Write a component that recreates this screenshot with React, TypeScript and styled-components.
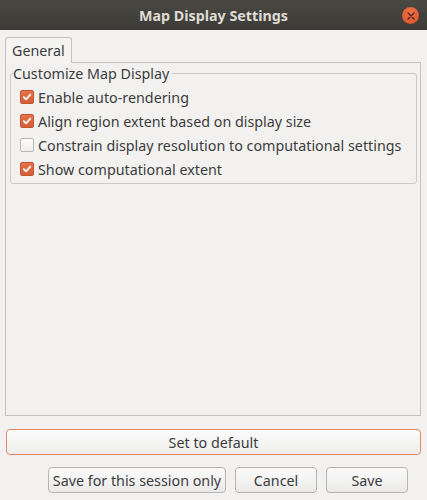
import React from 'react';
import styled, { createGlobalStyle } from 'styled-components';

const GlobalStyle = createGlobalStyle`
  html, body {
    margin: 0;
    padding: 0;
    width: 427px;
    height: 500px;
    overflow: hidden;
    background: #f2f1f0;
  }
  body {
    font-family: 'Noto Sans', 'Open Sans', 'DejaVu Sans', sans-serif;
    font-size: 14.3px;
    color: #3c3c3c;
  }
`;

const Window = styled.div`
  width: 427px;
  height: 500px;
  display: flex;
  flex-direction: column;
  background: #f2f1f0;
`;

const TitleBar = styled.div`
  height: 30px;
  flex: none;
  display: flex;
  align-items: center;
  justify-content: center;
  position: relative;
  background: linear-gradient(#4a4843, #3c3b37);
  color: #dfdbd2;
  font-weight: bold;
  font-size: 14.3px;
`;

const CloseButton = styled.div`
  position: absolute;
  right: 8px;
  top: 7px;
  width: 17px;
  height: 17px;
  border-radius: 50%;
  background: radial-gradient(circle at 50% 35%, #f0744a, #d8502a);
  display: flex;
  align-items: center;
  justify-content: center;
`;

const Body = styled.div`
  flex: 1;
  display: flex;
  flex-direction: column;
  padding: 6px 6px 7px 5px;
  min-height: 0;
`;

const TabStrip = styled.div`
  display: flex;
  height: 26px;
  flex: none;
`;

const Tab = styled.div`
  border: 1px solid #c6c2bd;
  border-bottom: none;
  border-radius: 3px 3px 0 0;
  padding: 0 6px;
  display: flex;
  align-items: center;
  background: #f5f4f3;
  position: relative;
  top: 1px;
  z-index: 1;
`;

const Panel = styled.div`
  flex: 1;
  border: 1px solid #c6c2bd;
  display: flex;
  flex-direction: column;
  padding: 2px 3px 0 4px;
  min-height: 0;
`;

const Group = styled.fieldset`
  margin: 0;
  padding: 3px 0 2px 2px;
  border: 1px solid #cdc9c4;
  border-radius: 3px;
  min-width: 0;
`;

const Legend = styled.legend`
  padding: 0 3px 0 0;
  line-height: 17px;
`;

const Options = styled.div`
  display: flex;
  flex-direction: column;
  padding-left: 7px;
`;

const Row = styled.label`
  display: flex;
  align-items: center;
  height: 24px;
  gap: 4px;
  white-space: nowrap;
`;

const Box = styled.span<{ $checked: boolean }>`
  width: 12px;
  height: 12px;
  flex: none;
  border-radius: 2px;
  border: 1px solid ${p => (p.$checked ? '#c4542b' : '#bcb8b3')};
  background: ${p => (p.$checked ? 'linear-gradient(#e4724a, #d35f36)' : 'linear-gradient(#fbfbfa, #efeeed)')};
  display: flex;
  align-items: center;
  justify-content: center;
`;

const WideButton = styled.div`
  margin-top: 13px;
  height: 24px;
  flex: none;
  border: 1px solid #e0896a;
  border-radius: 4px;
  background: linear-gradient(#fbfbfb, #efeeed);
  display: flex;
  align-items: center;
  justify-content: center;
  margin-left: 1px;
`;

const ButtonRow = styled.div`
  margin-top: 12px;
  display: flex;
  justify-content: flex-end;
  gap: 9px;
  padding-right: 13px;
  flex: none;
`;

const Button = styled.div<{ $w: number }>`
  width: ${p => p.$w}px;
  height: 24px;
  box-sizing: content-box;
  border: 1px solid #b8b4af;
  border-radius: 4px;
  background: linear-gradient(#fbfbfb, #ebeae9);
  display: flex;
  align-items: center;
  justify-content: center;
  white-space: nowrap;
`;

const options = [
  { label: 'Enable auto-rendering', checked: true },
  { label: 'Align region extent based on display size', checked: true },
  { label: 'Constrain display resolution to computational settings', checked: false },
  { label: 'Show computational extent', checked: true },
];

function CheckBox({ checked }: { checked: boolean }) {
  return (
    <Box $checked={checked}>
      {checked && (
        <svg width="10" height="10" viewBox="0 0 10 10">
          <path d="M1.8 5.2 L4 7.4 L8.3 2.6" fill="none" stroke="#fff" strokeWidth="1.8" strokeLinecap="round" strokeLinejoin="round" />
        </svg>
      )}
    </Box>
  );
}

export default function App() {
  return (
    <Window>
      <GlobalStyle />
      <TitleBar>
        Map Display Settings
        <CloseButton>
          <svg width="8" height="8" viewBox="0 0 8 8">
            <path d="M1 1 L7 7 M7 1 L1 7" stroke="#4a2418" strokeWidth="1.4" strokeLinecap="round" />
          </svg>
        </CloseButton>
      </TitleBar>
      <Body>
        <TabStrip>
          <Tab>General</Tab>
        </TabStrip>
        <Panel>
          <Group>
            <Legend>Customize Map Display</Legend>
            <Options>
              {options.map(o => (
                <Row key={o.label}>
                  <CheckBox checked={o.checked} />
                  {o.label}
                </Row>
              ))}
            </Options>
          </Group>
        </Panel>
        <WideButton>Set to default</WideButton>
        <ButtonRow>
          <Button $w={176}>Save for this session only</Button>
          <Button $w={80}>Cancel</Button>
          <Button $w={80}>Save</Button>
        </ButtonRow>
      </Body>
    </Window>
  );
}
